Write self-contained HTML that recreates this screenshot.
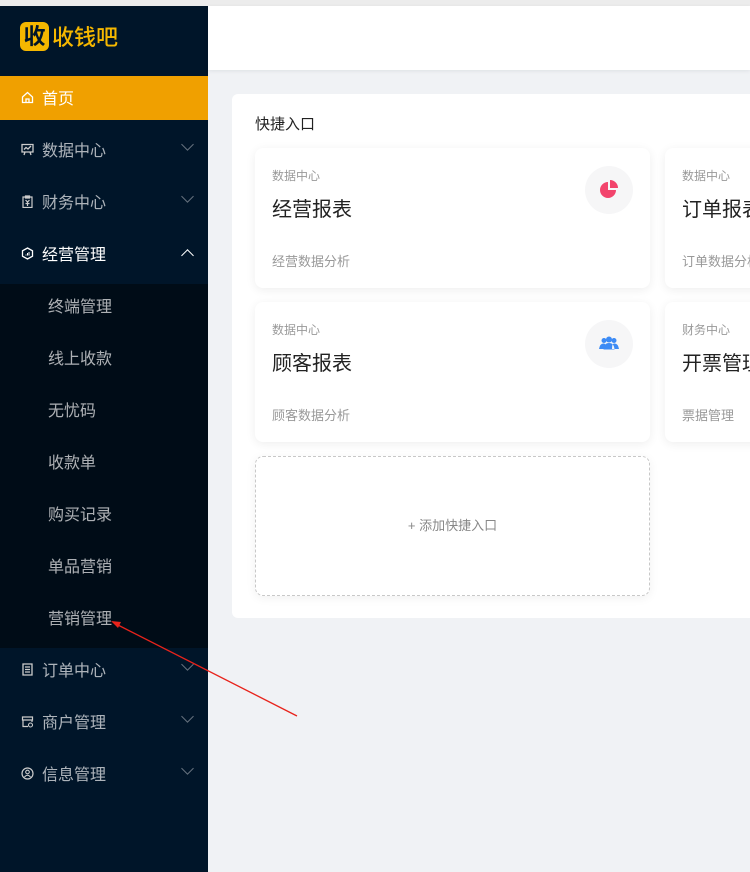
<!DOCTYPE html>
<html><head><meta charset="utf-8"><style>
*{margin:0;padding:0;box-sizing:border-box}
body{width:750px;height:872px;overflow:hidden;background:#f0f2f5;font-family:"Liberation Sans","Noto Sans CJK SC",sans-serif;position:relative}
.topstrip{position:absolute;left:0;top:0;width:750px;height:6px;background:#ececec}
.side{position:absolute;left:0;top:6px;width:208px;height:866px;background:#001529}
.logo{position:absolute;left:20px;top:14px;display:flex;align-items:center}
.lbox{width:29px;height:29px;background:#f5b700;border-radius:6px;color:#001529;font-size:22px;font-weight:bold;line-height:29px;text-align:center}
.ltxt{color:#f5b700;font-size:22px;margin-left:3px;font-weight:500}
.item{position:absolute;left:0;width:208px;height:44px;display:flex;align-items:center;color:rgba(255,255,255,.68);font-size:16px;padding-bottom:2px}
.item .ic{width:14px;height:14px;margin-left:20px;margin-right:8px;display:flex;align-items:center;justify-content:center}
.item.on{background:#f0a000;color:#fff}
.item.w{color:#fff}
.arr{position:absolute;right:16px;top:12px;width:9px;height:9px;border-right:1.5px solid rgba(255,255,255,.4);border-bottom:1.5px solid rgba(255,255,255,.4);transform:rotate(45deg)}
.arr.up{transform:rotate(-135deg);top:19px;border-color:#fff}
.sub{position:absolute;left:0;top:284px;width:208px;height:364px;background:#000c17}
.si{position:absolute;left:48px;color:rgba(255,255,255,.68);font-size:16px;line-height:20px}
.header{position:absolute;left:208px;top:6px;width:542px;height:64px;background:#fff;box-shadow:0 1px 4px rgba(0,21,41,.08)}
.panel{position:absolute;left:232px;top:94px;width:530px;height:524px;background:#fff;border-radius:6px}
.ptitle{position:absolute;left:23px;top:19px;font-size:15px;color:#222}
.card{position:absolute;width:395px;height:140px;background:#fff;border-radius:8px;box-shadow:0 2px 10px rgba(0,0,0,.07)}
.card .c1{position:absolute;left:17px;top:19px;font-size:12px;color:#999}
.card .c2{position:absolute;left:17px;top:45px;font-size:20px;color:#222}
.card .c3{position:absolute;left:17px;top:103px;font-size:13px;color:#999}
.card .ico{position:absolute;left:330px;top:18px;width:48px;height:48px;border-radius:50%;background:#f6f6f7;display:flex;align-items:center;justify-content:center}
.add{position:absolute;left:23px;top:362px;width:395px;height:140px;border:1px dashed #c8c8c8;border-radius:8px;box-shadow:0 2px 10px rgba(0,0,0,.06);text-align:center;line-height:138px;font-size:13px;color:#888}
</style></head><body>
<div class="topstrip"></div>
<div class="side">
 <div class="logo"><div class="lbox">收</div><div class="ltxt">收钱吧</div></div>
</div>
<div class="item on" style="top:76px"><span class="ic"><svg width="13" height="13" viewBox="0 0 13 13"><path d="M1.5 6L6.5 1.5 11.5 6V11.5H1.5Z M5 11.5V8H8V11.5" fill="none" stroke="#fff" stroke-width="1.3"/></svg></span>首页</div>
<div class="item" style="top:128px"><span class="ic"><svg width="13" height="13" viewBox="0 0 13 13"><path d="M1 1.5H12V9H1Z M3 6.5L5 4.5 7 6 10 3 M4 9L3 12 M9 9L10 12" fill="none" stroke="#ccc" stroke-width="1.3"/></svg></span>数据中心<i class="arr"></i></div>
<div class="item" style="top:180px"><span class="ic"><svg width="13" height="13" viewBox="0 0 13 13"><path d="M2 2H11V12.5H2Z M4.5 1H8.5V3H4.5Z M4.5 5L6.5 7 8.5 5 M6.5 7V11 M4.5 8.5H8.5" fill="none" stroke="#ccc" stroke-width="1.2"/></svg></span>财务中心<i class="arr"></i></div>
<div class="item w" style="top:232px"><span class="ic"><svg width="13" height="13" viewBox="0 0 13 13"><path d="M6.5 1L11.5 3.8V9.2L6.5 12 1.5 9.2V3.8Z" fill="none" stroke="#fff" stroke-width="1.3"/><path d="M5 8.5V7.5M6.5 8.5V6M8 8.5V5" stroke="#fff" stroke-width="1"/></svg></span>经营管理<i class="arr up"></i></div>
<div class="sub">
 <div class="si" style="top:14px">终端管理</div>
 <div class="si" style="top:66px">线上收款</div>
 <div class="si" style="top:118px">无忧码</div>
 <div class="si" style="top:170px">收款单</div>
 <div class="si" style="top:222px">购买记录</div>
 <div class="si" style="top:274px">单品营销</div>
 <div class="si" style="top:326px">营销管理</div>
</div>
<div class="item" style="top:648px"><span class="ic"><svg width="13" height="13" viewBox="0 0 13 13"><path d="M2 1H11V12H2Z M4 4H9M4 6.5H9M4 9H9" fill="none" stroke="#ccc" stroke-width="1.3"/></svg></span>订单中心<i class="arr"></i></div>
<div class="item" style="top:700px"><span class="ic"><svg width="13" height="13" viewBox="0 0 13 13"><path d="M1.5 2H11.5V5H1.5Z M2 5V11.5H7 M11 5V7" fill="none" stroke="#ccc" stroke-width="1.2"/><circle cx="9.5" cy="10" r="2" fill="none" stroke="#ccc" stroke-width="1.1"/></svg></span>商户管理<i class="arr"></i></div>
<div class="item" style="top:752px"><span class="ic"><svg width="13" height="13" viewBox="0 0 13 13"><circle cx="6.5" cy="6.5" r="5.5" fill="none" stroke="#ccc" stroke-width="1.2"/><circle cx="6.5" cy="5" r="1.8" fill="none" stroke="#ccc" stroke-width="1.1"/><path d="M3.5 10Q6.5 6.5 9.5 10" fill="none" stroke="#ccc" stroke-width="1.1"/></svg></span>信息管理<i class="arr"></i></div>
<div class="header"></div>
<div class="panel">
 <div class="ptitle">快捷入口</div>
 <div class="card" style="left:23px;top:54px"><div class="c1">数据中心</div><div class="c2">经营报表</div><div class="c3">经营数据分析</div>
  <div class="ico"><svg width="24" height="24" viewBox="0 0 24 24"><path d="M11 4A8 8 0 1 0 19 12H11Z" fill="#f2446c"/><path d="M13 2A8 8 0 0 1 21 10H13Z" fill="#f2446c"/></svg></div></div>
 <div class="card" style="left:433px;top:54px"><div class="c1">数据中心</div><div class="c2">订单报表</div><div class="c3">订单数据分析</div></div>
 <div class="card" style="left:23px;top:208px"><div class="c1">数据中心</div><div class="c2">顾客报表</div><div class="c3">顾客数据分析</div>
  <div class="ico"><svg width="24" height="24" viewBox="0 0 24 24" fill="#3d8bf5"><circle cx="7" cy="8.5" r="2.5"/><circle cx="17" cy="8.5" r="2.5"/><circle cx="12" cy="7.5" r="3"/><path d="M2 17Q3 11 7 11.5 9 11.5 9 17Z M22 17Q21 11 17 11.5 15 11.5 15 17Z M6.5 17.5Q7 11 12 11 17 11 17.5 17.5Z"/></svg></div></div>
 <div class="card" style="left:433px;top:208px"><div class="c1">财务中心</div><div class="c2">开票管理</div><div class="c3">票据管理</div></div>
 <div class="add">+ 添加快捷入口</div>
</div>
<svg style="position:absolute;left:0;top:0" width="750" height="872"><line x1="297" y1="716" x2="116" y2="624" stroke="#e8231b" stroke-width="1.3"/><path d="M111 621L121 622 118 628Z" fill="#e8231b"/></svg>
</body></html>
